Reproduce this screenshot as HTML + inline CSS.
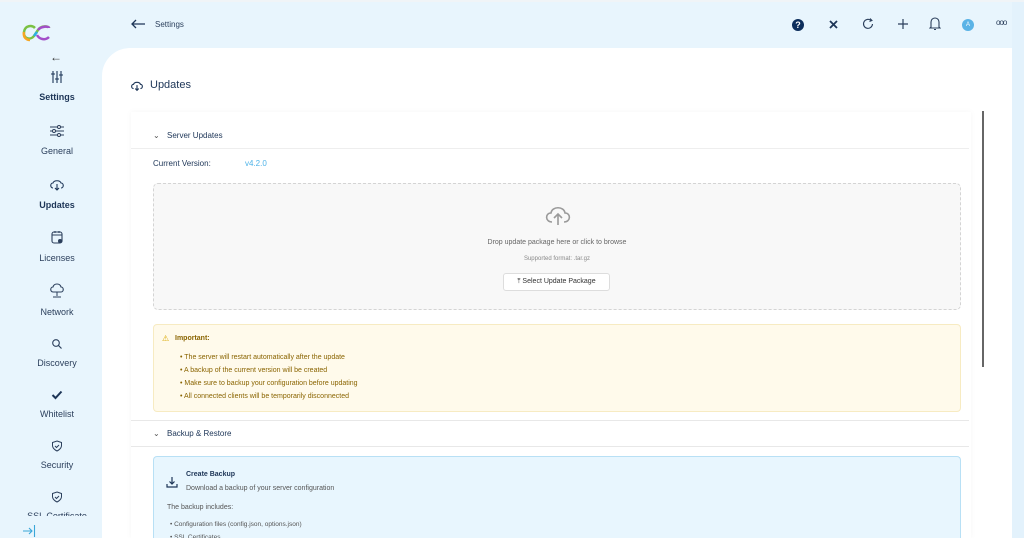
<!DOCTYPE html>
<html style="overflow:hidden;height:538px"><head><meta charset="utf-8"><style>
*{box-sizing:border-box;margin:0;padding:0}
body{width:1024px;height:538px;overflow:hidden;background:#e8f5fd;font-family:"Liberation Sans",sans-serif;position:relative;color:#1d3557}
.abs{position:absolute}
.nav{position:absolute;left:0;width:114px;text-align:center;font-size:9px;color:#2b3f5c}
.nav svg{display:block;margin:0 auto 6px}
.main{left:102px;top:48px;width:910px;height:490px;background:#fff;border-top-left-radius:28px}
.rstrip{left:1012px;top:0;width:12px;height:538px;background:#e3f2fc}
.card{left:131px;top:112px;width:840px;height:426px;background:#fff;box-shadow:0 0 6px rgba(0,0,0,.04)}
.t{font-size:8px}
</style></head><body>
<div class="abs rstrip"></div>
<div class="abs" style="left:0;top:0;width:1024px;height:2px;background:#f0f4f7"></div>
<svg class="abs" style="left:22px;top:24px" width="30" height="18" viewBox="0 0 30 18"><path d="M13 4 C10 1 3 1 2 8 C1 14 8 17 12 12 L16 6 C19 1 27 2 27 4" fill="none" stroke="#7ac143" stroke-width="2.5"/><path d="M16 6 C19 2 27 2 27 4 M27 13 C23 17 17 15 15 11" fill="none" stroke="#a34fc9" stroke-width="2.5"/><path d="M2 8 C1 14 5 16 8 16" fill="none" stroke="#f5a623" stroke-width="2.5"/><path d="M12 12 L15 8" stroke="#2ab0e4" stroke-width="2.5"/></svg>
<div class="abs" style="left:50px;top:50px;font-size:12px;color:#333">←</div>
<div class="nav" style="top:70px;font-weight:bold;color:#1d3557"><svg width="14" height="14" viewBox="0 0 14 14" style="margin-bottom:8px"><path d="M3 1v12M7 1v12M11 1v12M1 4h4M5 9h4M9 5h4" stroke="#1d3557" stroke-width="1.1"/></svg>Settings</div>
<div class="nav" style="top:124px"><svg width="16" height="14" viewBox="0 0 16 14" style="margin-bottom:8px"><path d="M1 3h14M1 7h14M1 11h14" stroke="#2b3f5c" stroke-width="1.1"/><circle cx="10" cy="3" r="1.5" fill="#fff" stroke="#2b3f5c"/><circle cx="5" cy="7" r="1.5" fill="#fff" stroke="#2b3f5c"/><circle cx="10" cy="11" r="1.5" fill="#fff" stroke="#2b3f5c"/></svg>General</div>
<div class="nav" style="top:178px;font-weight:bold;color:#1d3557"><svg width="16" height="14" viewBox="0 0 16 14" style="margin-bottom:8px"><path d="M4 10 C1 10 1 5 4 5 C5 2 11 2 12 5 C15 5 15 10 12 10" fill="none" stroke="#1d3557" stroke-width="1.1"/><path d="M8 6v6M6 10l2 2 2-2" fill="none" stroke="#1d3557" stroke-width="1.1"/></svg>Updates</div>
<div class="nav" style="top:230px"><svg width="14" height="15" viewBox="0 0 14 15" style="margin-bottom:8px"><rect x="2" y="2" width="10" height="11" rx="2" fill="none" stroke="#2b3f5c" stroke-width="1.1"/><path d="M2 5h10M5 1v2M9 1v2" stroke="#2b3f5c"/><circle cx="10" cy="11" r="2" fill="#2b3f5c"/></svg>Licenses</div>
<div class="nav" style="top:283px"><svg width="16" height="16" viewBox="0 0 16 16" style="margin-bottom:8px"><path d="M4 9 C1 9 1 4 4 4 C5 0 11 0 12 4 C15 4 15 9 12 9Z" fill="none" stroke="#2b3f5c" stroke-width="1.1"/><path d="M8 9v4M4 14h8" stroke="#2b3f5c"/></svg>Network</div>
<div class="nav" style="top:338px"><svg width="12" height="12" viewBox="0 0 12 12" style="margin-bottom:8px"><circle cx="5" cy="5" r="3.3" fill="none" stroke="#2b3f5c" stroke-width="1.1"/><path d="M7.5 7.5l3 3" stroke="#2b3f5c" stroke-width="1.2"/></svg>Discovery</div>
<div class="nav" style="top:389px"><svg width="12" height="12" viewBox="0 0 12 12" style="margin-bottom:8px"><path d="M1.5 6l3 3 6-6.5" fill="none" stroke="#1d3557" stroke-width="2"/></svg>Whitelist</div>
<div class="nav" style="top:440px"><svg width="12" height="12" viewBox="0 0 12 12" style="margin-bottom:8px"><path d="M6 1l4.5 1.5v3C10.5 9 6 11 6 11S1.5 9 1.5 5.5v-3Z" fill="none" stroke="#2b3f5c"/><path d="M4 6l1.5 1.5L8 5" fill="none" stroke="#2b3f5c"/></svg>Security</div>
<div class="nav" style="top:491px;height:25px;overflow:hidden"><svg width="12" height="12" viewBox="0 0 12 12" style="margin-bottom:8px"><path d="M6 1l4.5 1.5v3C10.5 9 6 11 6 11S1.5 9 1.5 5.5v-3Z" fill="none" stroke="#2b3f5c"/><path d="M4 6l1.5 1.5L8 5" fill="none" stroke="#2b3f5c"/></svg>SSL Certificate</div>
<svg class="abs" style="left:22px;top:525px" width="14" height="12" viewBox="0 0 14 12"><path d="M1 6h9M7 3l3 3-3 3M12.5 0v12" fill="none" stroke="#3aa6d8" stroke-width="1.1"/></svg>
<svg class="abs" style="left:130px;top:19px" width="16" height="10" viewBox="0 0 16 10"><path d="M15 5H2M6 1L2 5l4 4" fill="none" stroke="#1d3557" stroke-width="1.3"/></svg>
<div class="abs t" style="left:155px;top:20px;color:#2b3f5c">Settings</div>
<div class="abs" style="left:792px;top:19px;width:12px;height:12px;border-radius:50%;background:#0d2e5c;color:#fff;font-size:9px;font-weight:bold;text-align:center;line-height:12px">?</div>
<svg class="abs" style="left:829px;top:20px" width="9" height="9"><path d="M1 1l7 7M8 1L1 8" stroke="#1d3557" stroke-width="1.8"/></svg>
<svg class="abs" style="left:861px;top:17px" width="14" height="14" viewBox="0 0 14 14"><path d="M11.5 7A4.5 4.5 0 1 1 10 3.5" fill="none" stroke="#2b3f5c" stroke-width="1.1"/><path d="M9 1.5l2 2-2.5 1" fill="none" stroke="#2b3f5c"/></svg>
<svg class="abs" style="left:898px;top:19px" width="10" height="10"><path d="M5 0v10M0 5h10" stroke="#2b3f5c" stroke-width="1.2"/></svg>
<svg class="abs" style="left:929px;top:16px" width="12" height="15" viewBox="0 0 12 15"><path d="M2 11V6a4 4 0 0 1 8 0v5l1 1H1Z M5 13.5h2" fill="none" stroke="#2b3f5c" stroke-width="1.1"/></svg>
<div class="abs" style="left:962px;top:19px;width:12px;height:12px;border-radius:50%;background:#5ab3e6;color:#fff;font-size:6px;text-align:center;line-height:12px">A</div>
<div class="abs" style="left:996px;top:18px;font-size:8px;color:#2b3f5c;letter-spacing:-1px">ooo</div>
<div class="abs main"></div>
<svg class="abs" style="left:130px;top:80px" width="14" height="12" viewBox="0 0 16 14"><path d="M4 10 C1 10 1 5 4 5 C5 2 11 2 12 5 C15 5 15 10 12 10" fill="none" stroke="#1d3557" stroke-width="1.3"/><path d="M8 6v6M6 10l2 2 2-2" fill="none" stroke="#1d3557" stroke-width="1.3"/></svg>
<div class="abs" style="left:150px;top:79px;font-size:11px;color:#1d3557">Updates</div>
<div class="abs card"></div>
<div class="abs" style="left:982px;top:111px;width:2px;height:256px;background:#666"></div>
<div class="abs t" style="left:153px;top:131px;color:#555">⌄</div>
<div class="abs t" style="left:167px;top:131px;color:#1d3557">Server Updates</div>
<div class="abs" style="left:131px;top:148px;width:838px;height:1px;background:#eee"></div>
<div class="abs t" style="left:153px;top:159px;color:#1d3557">Current Version:</div>
<div class="abs t" style="left:245px;top:159px;color:#4fb3e8">v4.2.0</div>
<div class="abs" style="left:153px;top:183px;width:808px;height:127px;border:1px dashed #d4d4d4;border-radius:5px;background:#f8f8f8"></div>
<svg class="abs" style="left:543px;top:204px" width="30" height="22" viewBox="0 0 30 22"><path d="M9 18 C2 18 2 9 8 9 C9 2 21 2 22 9 C28 9 28 18 21 18" fill="none" stroke="#9a9a9a" stroke-width="1.6"/><path d="M15 21V11M11 14l4-4 4 4" fill="none" stroke="#9a9a9a" stroke-width="1.6"/></svg>
<div class="abs" style="left:153px;top:239px;width:808px;text-align:center;font-size:7px;color:#666">Drop update package here or click to browse</div>
<div class="abs" style="left:153px;top:256px;width:808px;text-align:center;font-size:6px;color:#888">Supported format: .tar.gz</div>
<div class="abs" style="left:503px;top:273px;width:107px;height:18px;border:1px solid #ddd;border-radius:3px;background:#fff;font-size:7px;color:#333;text-align:center;line-height:16px">⤒ Select Update Package</div>
<div class="abs" style="left:153px;top:324px;width:808px;height:88px;border:1px solid #f7ebc2;border-radius:4px;background:#fffaeb"></div>
<div class="abs t" style="left:162px;top:334px;color:#d9a800">⚠</div>
<div class="abs" style="left:175px;top:335px;font-size:7px;color:#8a6400;font-weight:bold">Important:</div>
<div class="abs" style="left:180px;top:351px;font-size:7px;color:#8a6400;line-height:13px">• The server will restart automatically after the update<br>• A backup of the current version will be created<br>• Make sure to backup your configuration before updating<br>• All connected clients will be temporarily disconnected</div>
<div class="abs" style="left:131px;top:420px;width:838px;height:1px;background:#e8e8e8"></div>
<div class="abs t" style="left:153px;top:429px;color:#555">⌄</div>
<div class="abs t" style="left:167px;top:429px;color:#1d3557">Backup &amp; Restore</div>
<div class="abs" style="left:131px;top:446px;width:838px;height:1px;background:#e8e8e8"></div>
<div class="abs" style="left:153px;top:456px;width:808px;height:82px;border:1px solid #b8e0f5;border-bottom:none;border-radius:4px 4px 0 0;background:#e8f6fe;overflow:hidden">
<svg class="abs" style="left:12px;top:19px" width="12" height="12" viewBox="0 0 12 12"><path d="M6 1v7M3.5 5.5L6 8l2.5-2.5M1 8v3h10V8" fill="none" stroke="#1d3557" stroke-width="1.2"/></svg>
<div class="abs" style="left:32px;top:14px;font-size:7px;color:#1d3557;font-weight:bold">Create Backup</div>
<div class="abs" style="left:32px;top:28px;font-size:7px;color:#555">Download a backup of your server configuration</div>
<div class="abs" style="left:13px;top:47px;font-size:7px;color:#555">The backup includes:</div>
<div class="abs" style="left:16px;top:61px;font-size:6.5px;color:#555;line-height:13px">• Configuration files (config.json, options.json)<br>• SSL Certificates</div>
</div>
</body></html>
